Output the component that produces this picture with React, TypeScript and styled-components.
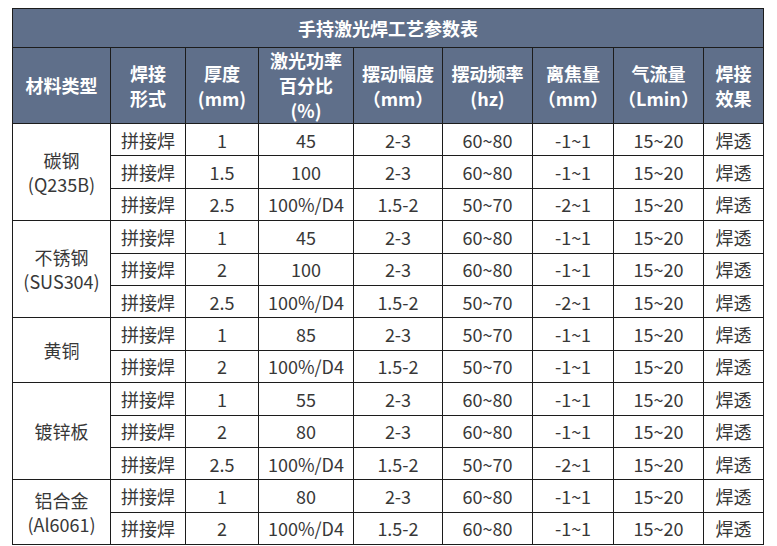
import styled, { createGlobalStyle } from 'styled-components'

const GlobalStyle = createGlobalStyle`
  html, body {
    margin: 0;
    padding: 0;
    background: #fff;
  }
  body {
    font-family: "Noto Sans CJK SC", "Noto Sans", sans-serif;
  }
`;

const Page = styled.div`
  padding: 8px 14px 0 12px;
`;

const Table = styled.table`
  border-collapse: collapse;
  table-layout: fixed;
  width: 751px;
  border: 1.5px solid #1c1c1c;
`;

const TitleCell = styled.th`
  background-color: #5f6f8a;
  color: #fff;
  font-size: 18px;
  font-weight: 700;
  height: 38px;
  padding: 0;
  border: 1.5px solid #1c1c1c;
  text-align: center;
`;

const HeadCell = styled.th`
  background-color: #5f6f8a;
  color: #fff;
  font-size: 18px;
  font-weight: 700;
  line-height: 25px;
  height: 75px;
  padding: 0;
  border: 1.5px solid #1c1c1c;
  text-align: center;
  white-space: pre-line;
`;

const Cell = styled.td`
  color: #383838;
  font-size: 18px;
  line-height: 24px;
  height: 31.4px;
  padding: 0;
  border: 1.5px solid #1c1c1c;
  text-align: center;
  white-space: pre-line;
`;

const columns = [
  { title: '材料类型', width: 98 },
  { title: '焊接\n形式', width: 75 },
  { title: '厚度\n(mm)', width: 73 },
  { title: '激光功率\n百分比\n(%)', width: 95 },
  { title: '摆动幅度\n（mm）', width: 89 },
  { title: '摆动频率\n(hz)', width: 90 },
  { title: '离焦量\n（mm）', width: 81 },
  { title: '气流量\n（Lmin）', width: 90 },
  { title: '焊接\n效果', width: 60 },
];

type Row = [string, string, string, string, string, string];

const groups: { name: string; rows: Row[] }[] = [
  {
    name: '碳钢\n(Q235B)',
    rows: [
      ['1', '45', '2-3', '60~80', '-1~1', '15~20'],
      ['1.5', '100', '2-3', '60~80', '-1~1', '15~20'],
      ['2.5', '100%/D4', '1.5-2', '50~70', '-2~1', '15~20'],
    ],
  },
  {
    name: '不锈钢\n(SUS304)',
    rows: [
      ['1', '45', '2-3', '60~80', '-1~1', '15~20'],
      ['2', '100', '2-3', '60~80', '-1~1', '15~20'],
      ['2.5', '100%/D4', '1.5-2', '50~70', '-2~1', '15~20'],
    ],
  },
  {
    name: '黄铜',
    rows: [
      ['1', '85', '2-3', '50~70', '-1~1', '15~20'],
      ['2', '100%/D4', '1.5-2', '50~70', '-1~1', '15~20'],
    ],
  },
  {
    name: '镀锌板',
    rows: [
      ['1', '55', '2-3', '60~80', '-1~1', '15~20'],
      ['2', '80', '2-3', '60~80', '-1~1', '15~20'],
      ['2.5', '100%/D4', '1.5-2', '50~70', '-2~1', '15~20'],
    ],
  },
  {
    name: '铝合金\n(Al6061)',
    rows: [
      ['1', '80', '2-3', '60~80', '-1~1', '15~20'],
      ['2', '100%/D4', '1.5-2', '60~80', '-1~1', '15~20'],
    ],
  },
];

export default function App() {
  return (
    <Page>
      <GlobalStyle />
      <Table>
        <colgroup>
          {columns.map((c) => (
            <col key={c.title} style={{ width: c.width }} />
          ))}
        </colgroup>
        <thead>
          <tr>
            <TitleCell colSpan={columns.length}>手持激光焊工艺参数表</TitleCell>
          </tr>
          <tr>
            {columns.map((c) => (
              <HeadCell key={c.title}>{c.title}</HeadCell>
            ))}
          </tr>
        </thead>
        <tbody>
          {groups.map((g) =>
            g.rows.map((r, i) => (
              <tr key={g.name + i}>
                {i === 0 && <Cell rowSpan={g.rows.length}>{g.name}</Cell>}
                <Cell>拼接焊</Cell>
                {r.map((v, j) => (
                  <Cell key={j}>{v}</Cell>
                ))}
                <Cell>焊透</Cell>
              </tr>
            ))
          )}
        </tbody>
      </Table>
    </Page>
  );
}
